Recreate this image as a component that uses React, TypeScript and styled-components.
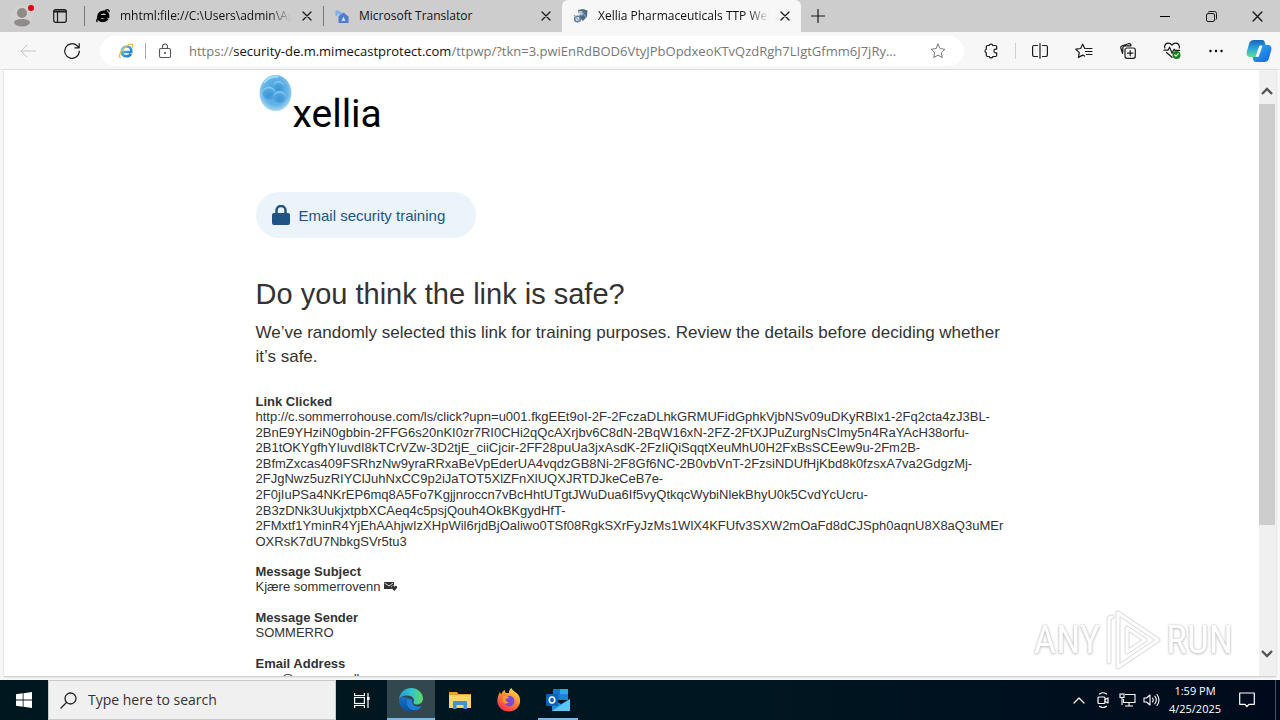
import React from "react";
import styled, { createGlobalStyle, css } from "styled-components";

const UI = `"Open Sans", "Noto Sans", sans-serif`;
const ARIAL = `"Liberation Sans", Arial, sans-serif`;

const GlobalStyle = createGlobalStyle`
  * { box-sizing: border-box; }
  body { margin: 0; overflow: hidden; font-family: ${UI}; color: #1b1b1b; }
  button { border: 0; padding: 0; background: none; color: inherit; font: inherit; }
  svg { display: block; flex: none; }
`;

const Desktop = styled.div`
  position: relative;
  display: flex;
  flex-direction: column;
  height: 100vh;
  background: #f7f7f7;
`;

/* ---------- tab strip ---------- */

const TabStrip = styled.header`
  display: flex;
  flex: none;
  height: 32px;
  background: #cdcdcd;
`;

const StripStart = styled.div`
  display: flex;
  align-items: center;
  gap: 19px;
  width: 84px;
  padding-left: 10px;
  flex: none;
`;

const Tab = styled.div<{ $active?: boolean }>`
  display: flex;
  align-items: center;
  flex: 0 1 239px;
  min-width: 0;
  padding: 0 9px 0 11px;
  gap: 9px;
  font-size: 12px;
  ${(p) =>
    p.$active
      ? css`background: #f7f7f7; border-radius: 6px 6px 0 0;`
      : css`background: linear-gradient(#777, #777) left center / 1px 20px no-repeat;`}
`;

const TabTitle = styled.span<{ $fade?: boolean }>`
  flex: 1;
  min-width: 0;
  overflow: hidden;
  white-space: nowrap;
  line-height: 20px;
  color: #111;
  ${(p) => p.$fade && css`mask-image: linear-gradient(90deg, #000 88%, transparent 100%);`}
`;

const IconButton = styled.button<{ $w: number }>`
  display: flex;
  align-items: center;
  justify-content: center;
  flex: none;
  width: ${(p) => p.$w}px;
  height: 100%;
`;

const Spacer = styled.div`
  flex: 1;
`;

/* ---------- toolbar ---------- */

const Toolbar = styled.div`
  display: flex;
  align-items: center;
  flex: none;
  height: 38px;
  padding-left: 6px;
  border-bottom: 1px solid #e6e6e6;
`;

const AddressBar = styled.div`
  display: flex;
  align-items: center;
  flex: 1;
  min-width: 0;
  height: 30px;
  margin: 0 5px 0 6px;
  padding: 0 18px;
  border-radius: 15px;
  background: #fff;
`;

const Divider = styled.span<{ $gap: number; $light?: boolean }>`
  flex: none;
  width: 1px;
  height: 16px;
  margin: 0 ${(p) => p.$gap}px;
  background: ${(p) => (p.$light ? "#cfcfcf" : "#aaa")};
`;

const Url = styled.div`
  flex: 1;
  min-width: 0;
  margin: 0 12px 0 16px;
  overflow: hidden;
  white-space: nowrap;
  font-size: 13px;
  line-height: 20px;
  color: #777;
  b { font-weight: 400; color: #111; }
`;

/* ---------- page ---------- */

const Frame = styled.div`
  display: flex;
  flex: 1;
  min-height: 0;
  margin: 0 4px 3px;
  border-bottom: 1px solid #cfd3d6;
  background: #fff;
  box-shadow: 0 0 2px #ccc;
`;

const Viewport = styled.main`
  flex: 1;
  min-width: 0;
  overflow: hidden;
  font-family: ${ARIAL};
  color: #333;
`;

const Column = styled.div`
  max-width: 752px;
  margin: 0 auto;
  padding-top: 3px;
`;

const Logo = styled.div`
  display: flex;
  height: 58px;
  color: #000;
  font-family: Roboto, sans-serif;
  font-size: 39px;
  line-height: 40px;
`;

const LogoText = styled.span`
  padding-top: 21px;
`;

const Pill = styled.div`
  display: flex;
  align-items: center;
  gap: 9px;
  width: 220px;
  height: 46px;
  margin-top: 61px;
  padding-left: 16px;
  border-radius: 23px;
  background: #ebf3fb;
  color: #1f5580;
  font-size: 15px;
`;

const Title = styled.h1`
  margin: 38px 0 0;
  font-size: 29px;
  font-weight: 400;
  line-height: 36px;
`;

const Lead = styled.p`
  margin: 9px 0 0;
  font-size: 17px;
  line-height: 24px;
`;

const Details = styled.dl`
  margin: 25px 0 0;
  font-size: 13px;
  line-height: 1.2;
  dt { font-weight: 700; line-height: 15px; }
  dd { margin: 0 0 15px; }
`;

const Line = styled.span`
  display: block;
  white-space: nowrap;
`;

const InlineIcon = styled.span`
  display: inline-block;
`;

const ScrollTrack = styled.div`
  display: flex;
  flex-direction: column;
  flex: none;
  width: 17px;
  padding-right: 1px;
  background: #f0f0f0;
`;

const ScrollButton = styled.button<{ $down?: boolean }>`
  display: flex;
  justify-content: center;
  align-items: center;
  flex: none;
  height: ${(p) => (p.$down ? 44 : 34)}px;
  padding-top: ${(p) => (p.$down ? 0 : 8)}px;
`;

const Thumb = styled.div`
  flex: 421;
  background: #cdcdcd;
`;

const TrackRest = styled.div`
  flex: 107;
`;

/* ---------- watermark ---------- */

const Watermark = styled.div`
  position: absolute;
  right: 47px;
  bottom: 48px;
  display: flex;
  align-items: center;
  gap: 3px;
  color: #fff;
  font: 400 39px/64px "Liberation Sans Narrow", "Roboto Condensed", "Liberation Sans", sans-serif;
  text-shadow: 0 0 2px #aaa, 0 1px 3px #bbb;
  opacity: 0.85;
`;

/* ---------- taskbar ---------- */

const Taskbar = styled.footer`
  display: flex;
  flex: none;
  height: 40px;
  background: linear-gradient(90deg, #00171f, #001621 60%, #000a1c);
  color: #fff;
`;

const TaskButton = styled.button<{ $active?: boolean; $open?: boolean }>`
  display: flex;
  align-items: center;
  justify-content: center;
  flex: none;
  width: 48px;
  margin-right: 1px;
  background: ${(p) => (p.$active ? "#33474f" : "none")};
  background-image: ${(p) =>
    p.$active || p.$open ? "linear-gradient(#76b9ed, #76b9ed)" : "none"};
  background-repeat: no-repeat;
  background-position: bottom;
  background-size: ${(p) => (p.$active ? "100%" : "40px")} 2px;
`;

const Search = styled.label`
  display: flex;
  align-items: center;
  gap: 11px;
  flex: 0 1 288px;
  min-width: 0;
  margin-right: 2px;
  padding-left: 11px;
  border: 1px solid #c9c9c9;
  background: #f0f0f0;
  color: #222;
`;

const SearchInput = styled.input`
  flex: 1;
  min-width: 0;
  border: 0;
  outline: 0;
  padding: 0;
  background: none;
  font: 14px/20px ${UI};
  &::placeholder { color: #333; opacity: 1; }
`;

const Tray = styled.div`
  display: flex;
  align-items: center;
  padding-right: 8px;
  border-right: 1px solid #4a5563;
  margin-right: 4px;
`;

const Clock = styled.time`
  width: 64px;
  text-align: center;
  font-size: 11px;
  line-height: 18px;
`;

const line = { fill: "none", stroke: "currentColor", strokeLinecap: "round", strokeLinejoin: "round" } as const;

const Cross = ({ size = 10 }: { size?: number }) => (
  <svg width={size} height={size} viewBox="0 0 10 10" {...line} strokeWidth="1.3">
    <path d="M1 1l8 8M9 1l-8 8" />
  </svg>
);

const IeBold = () => (
  <svg width="16" height="16" viewBox="0 0 16 16" fill="none" stroke="#000">
    <path
      d="M4 8.700H12.800C13 5.600 11.300 4 8.800 4C6 4 4 5.900 3.700 8.600C3.500 11.200 5 12.600 7.700 12.600C9.800 12.600 11.200 11.900 12.200 10.600"
      strokeWidth="3.200"
    />
    <path d="M2.500 13.800C1 13.500 2 10.500 5 7M10 2.500C12.500 1.200 14.500 1.500 14 4" strokeWidth="1.400" />
  </svg>
);

const IeColor = () => (
  <svg width="16" height="16" viewBox="0 0 16 16" fill="none">
    <defs>
      <linearGradient id="ieBlue" x1="0" y1="0" x2="1" y2="1">
        <stop offset="0" stopColor="#5fd0f5" />
        <stop offset="1" stopColor="#1c6fc4" />
      </linearGradient>
    </defs>
    <path
      d="M4.200 9H13.300C13.600 5.400 11.600 3.500 8.800 3.500C5.800 3.500 3.800 5.600 3.800 8.600C3.800 11.500 5.600 13.300 8.600 13.300C10.700 13.300 12.200 12.300 12.900 10.900"
      stroke="url(#ieBlue)"
      strokeWidth="2.600"
    />
    <path
      d="M2.800 14.500C.5 14.800 1.300 10.300 4.700 6.500C8.500 2.200 13.500.3 14.500 1.700C15 2.500 14.600 3.700 14 4.800"
      stroke="#e8bd3c"
      strokeWidth="1.300"
    />
  </svg>
);

const STAR = "M8 1.200l2.100 4.400 4.800.7-3.500 3.400.9 4.800L8 12.200l-4.300 2.300.9-4.800L1.100 6.300l4.800-.7z";

const LinkLines = [
  "http://c.sommerrohouse.com/ls/click?upn=u001.fkgEEt9oI-2F-2FczaDLhkGRMUFidGphkVjbNSv09uDKyRBIx1-2Fq2cta4zJ3BL-",
  "2BnE9YHziN0gbbin-2FFG6s20nKI0zr7RI0CHi2qQcAXrjbv6C8dN-2BqW16xN-2FZ-2FtXJPuZurgNsCImy5n4RaYAcH38orfu-",
  "2B1tOKYgfhYIuvdI8kTCrVZw-3D2tjE_ciiCjcir-2FF28puUa3jxAsdK-2FzIiQiSqqtXeuMhU0H2FxBsSCEew9u-2Fm2B-",
  "2BfmZxcas409FSRhzNw9yraRRxaBeVpEderUA4vqdzGB8Ni-2F8Gf6NC-2B0vbVnT-2FzsiNDUfHjKbd8k0fzsxA7va2GdgzMj-",
  "2FJgNwz5uzRIYClJuhNxCC9p2iJaTOT5XlZFnXlUQXJRTDJkeCeB7e-",
  "2F0jIuPSa4NKrEP6mq8A5Fo7Kgjjnroccn7vBcHhtUTgtJWuDua6If5vyQtkqcWybiNlekBhyU0k5CvdYcUcru-",
  "2B3zDNk3UukjxtpbXCAeq4c5psjQouh4OkBKgydHfT-",
  "2FMxtf1YminR4YjEhAAhjwIzXHpWil6rjdBjOaliwo0TSf08RgkSXrFyJzMs1WlX4KFUfv3SXW2mOaFd8dCJSph0aqnU8X8aQ3uMEr",
  "OXRsK7dU7NbkgSVr5tu3",
];

function Tabs() {
  return (
    <TabStrip>
      <StripStart>
        <svg width="24" height="24" viewBox="0 0 24 24">
          <circle cx="12" cy="12" r="11" fill="#d3d1d0" />
          <circle cx="12" cy="9" r="5" fill="#8e8b89" />
          <path d="M4 19c0-3 3.500-4 8-4s8 1 8 4c-1.500 2.500-4.500 3.500-8 3.500s-6.500-1-8-3.500z" fill="#8e8b89" />
          <circle cx="21" cy="4" r="3" fill="#e0040c" />
        </svg>
        <svg width="14" height="14" viewBox="0 0 14 14" {...line} strokeWidth="1.200">
          <rect x=".7" y=".7" width="12.600" height="12.600" rx="2" />
          <path d="M1 2.500h12" strokeWidth="2" /><path d="M4.500 3v10" />
        </svg>
      </StripStart>
      <Tab>
        <IeBold />
        <TabTitle $fade>mhtml:file://C:\Users\admin\App</TabTitle>
        <IconButton $w={14} aria-label="Close tab"><Cross /></IconButton>
      </Tab>
      <Tab>
        <svg width="16" height="16" viewBox="0 0 16 16">
          <path d="M1.500 2.500h4v1.500h2v4H5V6H3.500v2h-2z" fill="#7fb2ec" />
          <path d="M4.500 8.500l5-4 5 4V15h-10z" fill="#4f7dcb" />
          <path d="M7.500 13l2-4.500 2 4.500z" fill="#c9defa" />
        </svg>
        <TabTitle>Microsoft Translator</TabTitle>
        <IconButton $w={14} aria-label="Close tab"><Cross /></IconButton>
      </Tab>
      <Tab $active>
        <svg width="16" height="16" viewBox="0 0 16 16">
          <path d="M5 2l5-1 4.500 1.500-.5 6-4 4.500-3-3z" fill="#4f6b85" />
          <path d="M6 3l4 .5-.5 4L6 7z" fill="#b9cbdc" />
          <circle cx="4.500" cy="11" r="2.800" fill="none" stroke="#5f7c97" strokeWidth="1.600" />
          <path d="M1 7l6 7M9 4l4 5" stroke="#88a2ba" strokeWidth="1.200" />
        </svg>
        <TabTitle $fade>Xellia Pharmaceuticals TTP Web Portal</TabTitle>
        <IconButton $w={14} aria-label="Close tab"><Cross /></IconButton>
      </Tab>
      <IconButton $w={34} aria-label="New tab">
        <svg width="14" height="14" viewBox="0 0 14 14" {...line} strokeWidth="1.200"><path d="M7 .5v13M.5 7h13" /></svg>
      </IconButton>
      <Spacer />
      <IconButton $w={46} aria-label="Minimize">
        <svg width="10" height="10" viewBox="0 0 10 10"><path d="M0 5.500h10" stroke="#000" /></svg>
      </IconButton>
      <IconButton $w={46} aria-label="Restore">
        <svg width="11" height="11" viewBox="0 0 11 11" {...line}>
          <rect x=".5" y="2.500" width="8" height="8" rx="1.500" />
          <path d="M2.500.9C3 .5 3.500.5 4 .5h4.500a2 2 0 0 1 2 2V7c0 .5 0 1-.4 1.500" />
        </svg>
      </IconButton>
      <IconButton $w={46} aria-label="Close window"><Cross size={11} /></IconButton>
    </TabStrip>
  );
}

function AddressRow() {
  return (
    <Toolbar>
      <IconButton $w={44} aria-label="Back">
        <svg width="16" height="14" viewBox="0 0 16 14" {...line} stroke="#c4c4c4"><path d="M15.500 7H1M7 1L1 7l6 6" /></svg>
      </IconButton>
      <IconButton $w={44} aria-label="Refresh">
        <svg width="18" height="18" viewBox="0 0 18 18" {...line} strokeWidth="1.200">
          <path d="M16.300 9a7.300 7.300 0 1 1-2.200-5.200L16 5.700M16.200 1.500v4.300h-4.300" />
        </svg>
      </IconButton>
      <AddressBar>
        <IeColor />
        <Divider $gap={11} />
        <svg width="16" height="16" viewBox="0 0 16 16" {...line} stroke="#555" strokeWidth="1.100">
          <rect x="2.500" y="5.500" width="11" height="9" rx="1.500" />
          <path d="M5.500 5.500V3.500a2.500 2.500 0 0 1 5 0v2" />
          <circle cx="8" cy="10" r=".5" fill="#555" />
        </svg>
        <Url>
          https://<b>security-de.m.mimecastprotect.com</b>/ttpwp/?tkn=3.pwiEnRdBOD6VtyJPbOpdxeoKTvQzdRgh7LIgtGfmm6J7jRy...
        </Url>
        <svg width="16" height="16" viewBox="0 0 16 16" {...line} stroke="#777"><path d={STAR} /></svg>
      </AddressBar>
      <IconButton $w={44} aria-label="Extensions">
        <svg width="16" height="16" viewBox="0 0 16 16" {...line} strokeWidth="1.200">
          <path d="M4.500 2.500h1.700a1.900 1.900 0 0 1 3.700 0h2.600a1.200 1.200 0 0 1 1.200 1.200v2.500h-1a1.800 1.800 0 0 0 0 3.600h1v2.500a1.200 1.200 0 0 1-1.200 1.200H9.900a1.900 1.900 0 0 1-3.700 0H4.500a1.200 1.200 0 0 1-1.200-1.200V9.800a1.900 1.900 0 0 1 0-3.600V3.700a1.200 1.200 0 0 1 1.200-1.200z" />
        </svg>
      </IconButton>
      <Divider $gap={2} $light />
      <IconButton $w={44} aria-label="Split screen">
        <svg width="16" height="16" viewBox="0 0 16 16" {...line} strokeWidth="1.200">
          <path d="M5.500 2.500h-3.500a1.400 1.400 0 0 0-1.400 1.400v8.200a1.400 1.400 0 0 0 1.400 1.400h3.500M10.500 2.500h3.500a1.400 1.400 0 0 1 1.400 1.400v8.200a1.400 1.400 0 0 1-1.400 1.400h-3.500M8 .7v14.600" />
        </svg>
      </IconButton>
      <IconButton $w={44} aria-label="Favorites">
        <svg width="18" height="16" viewBox="0 0 18 16" {...line} strokeWidth="1.200">
          <path d="M10.500 5.500H9.800L7.700 1.200 5.600 5.500l-4.800.7 3.500 3.400-.9 4.800 4.300-2.300 1.800 1M11.500 5.500h5.500M10.500 8.500h6.500M11.500 11.500h5.500" />
        </svg>
      </IconButton>
      <IconButton $w={44} aria-label="Collections">
        <svg width="16" height="16" viewBox="0 0 16 16" {...line} strokeWidth="1.200">
          <rect x="5" y="5" width="10.300" height="10.300" rx="2" />
          <path d="M10.200 7.500v5.300M7.500 10.200h5.300M2.600 10.500L.9 5.200a2 2 0 0 1 1.300-2.500L8.600.7a2 2 0 0 1 2.400 1.400M2.800 9V5a2.200 2.200 0 0 1 2.200-2.200h6" />
        </svg>
      </IconButton>
      <IconButton $w={44} aria-label="Browser essentials">
        <svg width="18" height="17" viewBox="0 0 18 17" {...line} strokeWidth="1.200">
          <path d="M9 3.200C7.200.3 2.500.5 1.700 4c-.2.800-.1 1.500.1 2M9 3.200c1.800-2.900 6.500-2.700 7.300.8.200.7.100 1.400 0 2M1 8.200h4l1.600-3 2.500 6 2-4 1 1.200h4.500M3.500 10.500L9 15.300" />
          <circle cx="13.500" cy="13" r="4" fill="#15801b" stroke="none" />
          <path d="M11.800 13l1.200 1.200 2.200-2.400" stroke="#fff" />
        </svg>
      </IconButton>
      <IconButton $w={44} aria-label="Settings and more">
        <svg width="14" height="4" viewBox="0 0 14 4"><circle cx="1.500" cy="2" r="1.200" /><circle cx="7" cy="2" r="1.200" /><circle cx="12.500" cy="2" r="1.200" /></svg>
      </IconButton>
      <IconButton $w={42} aria-label="Copilot">
        <svg width="26" height="24" viewBox="0 0 26 24">
          <defs>
            <linearGradient id="cpA" x1="0" y1="0" x2="0" y2="1">
              <stop offset="0" stopColor="#1763b8" /><stop offset=".5" stopColor="#2aa6dd" /><stop offset="1" stopColor="#5fe08c" />
            </linearGradient>
            <linearGradient id="cpB" x1="0" y1="0" x2="1" y2="1">
              <stop offset="0" stopColor="#35b5ef" /><stop offset="1" stopColor="#0f62e0" />
            </linearGradient>
          </defs>
          <path d="M8 1h8c2 0 2.500 1 3 3l.7 2.500h-3c-2 0-3 1-3.600 3L11 16c-.5 1.500-1.500 2-3 2H4c-3 0-4-2.500-3-6L3 5c.8-3 2.500-4 5-4z" fill="url(#cpA)" />
          <path d="M18 23h-8c-2 0-2.500-1-3-3l-.5-2H9c2 0 3-1 3.600-3L15 8c.5-1.500 1.500-2 3-2h4c3 0 4 2.500 3 6l-2 7c-.8 3-2.500 4-5 4z" fill="url(#cpB)" />
          <path d="M14.500 8L11.500 16.500" stroke="#fff" strokeWidth="3" strokeLinecap="round" />
        </svg>
      </IconButton>
    </Toolbar>
  );
}

function Page() {
  return (
    <Frame>
      <Viewport>
        <Column>
          <Logo>
            <svg width="37" height="40" viewBox="0 0 37 40">
              <defs>
                <radialGradient id="cell" cx=".5" cy=".45" r=".6">
                  <stop offset="0" stopColor="#3c9bdc" /><stop offset=".65" stopColor="#64b5e6" /><stop offset="1" stopColor="#c0e4f5" />
                </radialGradient>
                <radialGradient id="cellInner" cx=".5" cy=".7" r=".6">
                  <stop offset="0" stopColor="#3c94d6" /><stop offset=".8" stopColor="#4fa6e0" /><stop offset="1" stopColor="#84c6ee" />
                </radialGradient>
              </defs>
              <ellipse cx="19.500" cy="20" rx="16" ry="18" fill="url(#cell)" />
              <circle cx="22.500" cy="13.500" r="5.500" fill="url(#cellInner)" />
              <circle cx="13" cy="20" r="6.500" fill="url(#cellInner)" />
              <circle cx="23.500" cy="24" r="6" fill="url(#cellInner)" />
              <path d="M8 10c3-5 9-7 14-6" stroke="#9fdcf5" strokeWidth="2" fill="none" />
            </svg>
            <LogoText>xellia</LogoText>
          </Logo>
          <Pill>
            <svg width="18" height="20" viewBox="0 0 18 20">
              <rect x="0" y="8" width="18" height="12" rx="2" fill="#1f5580" />
              <path d="M4.500 9V5.500a4.500 4.500 0 0 1 9 0V9" fill="none" stroke="#1f5580" strokeWidth="2.500" />
            </svg>
            <span>Email security training</span>
          </Pill>
          <Title>Do you think the link is safe?</Title>
          <Lead>
            We’ve randomly selected this link for training purposes. Review the details before deciding whether it’s safe.
          </Lead>
          <Details>
            <dt>Link Clicked</dt>
            <dd>{LinkLines.map((l) => <Line key={l}>{l}</Line>)}</dd>
            <dt>Message Subject</dt>
            <dd>
              Kjære sommerrovenn{" "}
              <InlineIcon>
                <svg width="14" height="9" viewBox="0 0 14 9">
                  <path d="M0 0h10v3.500L7 4l1 3H0z" fill="#333" />
                  <path d="M.5 1l4.500 3 4-3" stroke="#fff" strokeWidth=".8" fill="none" />
                  <path d="M10.300 9L7.500 6C6.800 4 9.300 3 10.300 4.800 11.300 3 13.800 4 13 6z" fill="#333" />
                </svg>
              </InlineIcon>
            </dd>
            <dt>Message Sender</dt>
            <dd>SOMMERRO</dd>
            <dt>Email Address</dt>
            <dd>user@company.dk</dd>
          </Details>
        </Column>
      </Viewport>
      <ScrollTrack>
        <ScrollButton aria-label="Scroll up">
          <svg width="12" height="8" viewBox="0 0 12 8" fill="none" stroke="#555" strokeWidth="2.400"><path d="M1 7l5-5 5 5" /></svg>
        </ScrollButton>
        <Thumb />
        <TrackRest />
        <ScrollButton $down aria-label="Scroll down">
          <svg width="12" height="8" viewBox="0 0 12 8" fill="none" stroke="#555" strokeWidth="2.400"><path d="M1 1l5 5 5-5" /></svg>
        </ScrollButton>
      </ScrollTrack>
    </Frame>
  );
}

function TaskRow() {
  return (
    <Taskbar>
      <IconButton $w={48} aria-label="Start">
        <svg width="16" height="16" viewBox="0 0 16 16" fill="#fff">
          <path d="M0 2.200L6.700 1.300v6.300H0zM7.500 1.200L16 0v7.600H7.500zM0 8.400h6.700v6.300L0 13.800zM7.500 8.400H16V16l-8.500-1.200z" />
        </svg>
      </IconButton>
      <Search>
        <svg width="17" height="17" viewBox="0 0 17 17" {...line} strokeWidth="1.300">
          <circle cx="10.500" cy="6.500" r="5.500" /><path d="M6.500 10.500L1 16" />
        </svg>
        <SearchInput placeholder="Type here to search" />
      </Search>
      <TaskButton aria-label="Task view">
        <svg width="16" height="15" viewBox="0 0 16 15" fill="none" stroke="#fff" strokeWidth="1.200">
          <path d="M.6 0v2.500h9.800V0M.6 15v-2.500h9.800V15M14 0v15" /><rect x=".6" y="4.500" width="9.800" height="6" />
          <rect x="13" y="4" width="2.500" height="3" fill="#fff" stroke="none" />
        </svg>
      </TaskButton>
      <TaskButton $active aria-label="Microsoft Edge">
        <svg width="24" height="24" viewBox="0 0 24 24">
          <defs>
            <linearGradient id="edA" x1="0" y1=".5" x2="1" y2=".5">
              <stop offset="0" stopColor="#1f9bdc" /><stop offset=".55" stopColor="#35c6c8" /><stop offset="1" stopColor="#62da5c" />
            </linearGradient>
            <linearGradient id="edB" x1="0" y1="0" x2="0" y2="1">
              <stop offset="0" stopColor="#1672c4" /><stop offset="1" stopColor="#0b4f9c" />
            </linearGradient>
          </defs>
          <path d="M0 12A12 12 0 0 0 15 23.600 10 10 0 0 1 8.500 10C6 8 1 9 0 12z" fill="url(#edB)" />
          <path d="M8.500 10.500c-3 6 2 14 10.500 11 1.500-.7 3-2.200 3.800-3.700-4.500 2.500-11-.3-9.500-6.200z" fill="#1f7fd6" />
          <path d="M0 12C0 5 5.500 0 12 0s12 5 12 10.500c0 3.700-3 6-6 6-2.500 0-4.200-1-3.500-2.200C16.500 11 13 7.500 8.500 7.500 4 7.500.5 9.500 0 12z" fill="url(#edA)" />
        </svg>
      </TaskButton>
      <TaskButton aria-label="File Explorer">
        <svg width="22" height="18" viewBox="0 0 22 18">
          <path d="M0 1h8l1.500 2H22v14H0z" fill="#e6a521" /><path d="M0 4h22v13H0z" fill="#fbd568" />
          <path d="M4 18v-7q0-1 1-1h12q1 0 1 1v7h-3.500v-4h-7v4z" fill="#3f92cf" />
        </svg>
      </TaskButton>
      <TaskButton aria-label="Firefox">
        <svg width="24" height="24" viewBox="0 0 24 24">
          <defs>
            <linearGradient id="ff" x1=".8" y1="0" x2=".2" y2="1">
              <stop offset="0" stopColor="#ffe14a" /><stop offset=".45" stopColor="#ff8a2a" /><stop offset="1" stopColor="#f0275f" />
            </linearGradient>
          </defs>
          <path d="M3 4c.2 1 .6 1.700 1.300 2.200C5 4 6.500 2.500 8 2c-.3 1.200 0 2.300 1 3h3c-.2-2 .7-4 2.500-5 .5 3 6.500 4.500 8 9 2.500 8-3 14.500-10.500 14.500S-.5 17.500.5 11C.9 8 1.700 6 3 4z" fill="url(#ff)" />
          <circle cx="12.300" cy="13" r="5.200" fill="#7d47d8" />
          <path d="M6 8.500c2-1.500 4.500-.5 6 .8-1 1.200-2.500 1.200-3.500 2.200 0 1.500 1 2.500 3 2.500-1 2-4 2-5.300 0z" fill="#ff9a2e" />
        </svg>
      </TaskButton>
      <TaskButton $open aria-label="Outlook">
        <svg width="24" height="22" viewBox="0 0 24 22">
          <path d="M7 0h15v11H7z" fill="#1a73c8" /><path d="M14 0h8v5.500h-8z" fill="#33a8e8" /><path d="M14 5.500h8V11h-8z" fill="#1685d8" />
          <path d="M6 10l9 5 9-5v12H6z" fill="#1f8fdc" /><path d="M6 22L24 10v12z" fill="#5cc5f4" />
          <rect x="0" y="5" width="12" height="12" rx="1" fill="#0d62b8" />
          <ellipse cx="6" cy="11" rx="2.700" ry="3" fill="none" stroke="#fff" strokeWidth="1.600" />
        </svg>
      </TaskButton>
      <Spacer />
      <Tray>
        <IconButton $w={24} aria-label="Show hidden icons">
          <svg width="12" height="7" viewBox="0 0 12 7" {...line} strokeWidth="1.200"><path d="M1 6l5-5 5 5" /></svg>
        </IconButton>
        <IconButton $w={24} aria-label="Meet now">
          <svg width="12" height="16" viewBox="0 0 12 16" {...line} strokeWidth="1.200">
            <rect x="1" y="5" width="7" height="6.500" rx="1" /><path d="M8 7.500l3-1.500v5L8 9.500M2.500 2Q6-.5 9.500 2M2.500 14.300q3.500 2.500 7 0" />
          </svg>
        </IconButton>
        <IconButton $w={24} aria-label="Network">
          <svg width="17" height="14" viewBox="0 0 17 14" fill="none" stroke="#fff" strokeWidth="1.100">
            <path d="M6 1.500h10v8H4.500V6M10 9.500V13M6 13h8" /><rect x="1" y="1" width="4" height="3.500" /><path d="M3 4.500V12" />
          </svg>
        </IconButton>
        <IconButton $w={24} aria-label="Volume">
          <svg width="17" height="14" viewBox="0 0 17 14" {...line} strokeWidth="1.100">
            <path d="M1 5h2.500L7 2v10L3.500 9H1zM9.500 5q1.500 2 0 4M11.800 3.200q3 3.800 0 7.600M14 1.500q4 5.500 0 11" />
          </svg>
        </IconButton>
        <Clock>1:59 PM<br />4/25/2025</Clock>
        <IconButton $w={40} aria-label="Notifications">
          <svg width="16" height="16" viewBox="0 0 16 16" {...line} strokeWidth="1.200"><path d="M.7 1h14.600v11.300H10L8 14.500l-2-2.200H.7z" /></svg>
        </IconButton>
      </Tray>
    </Taskbar>
  );
}

export default function App() {
  return (
    <Desktop>
      <GlobalStyle />
      <Tabs />
      <AddressRow />
      <Page />
      <TaskRow />
      <Watermark>
        <span>ANY</span>
        <svg width="60" height="64" viewBox="0 0 60 64" fill="none" strokeLinejoin="round" strokeLinecap="round">
          <path d="M6 54V12q0-3 3-3M15 5v54L55 32 15 5M24 20v24l18-12z" stroke="#d4d4d4" strokeWidth="5" />
          <path d="M6 54V12q0-3 3-3M15 5v54L55 32 15 5M24 20v24l18-12z" stroke="#fff" strokeWidth="3" />
        </svg>
        <span>RUN</span>
      </Watermark>
    </Desktop>
  );
}
